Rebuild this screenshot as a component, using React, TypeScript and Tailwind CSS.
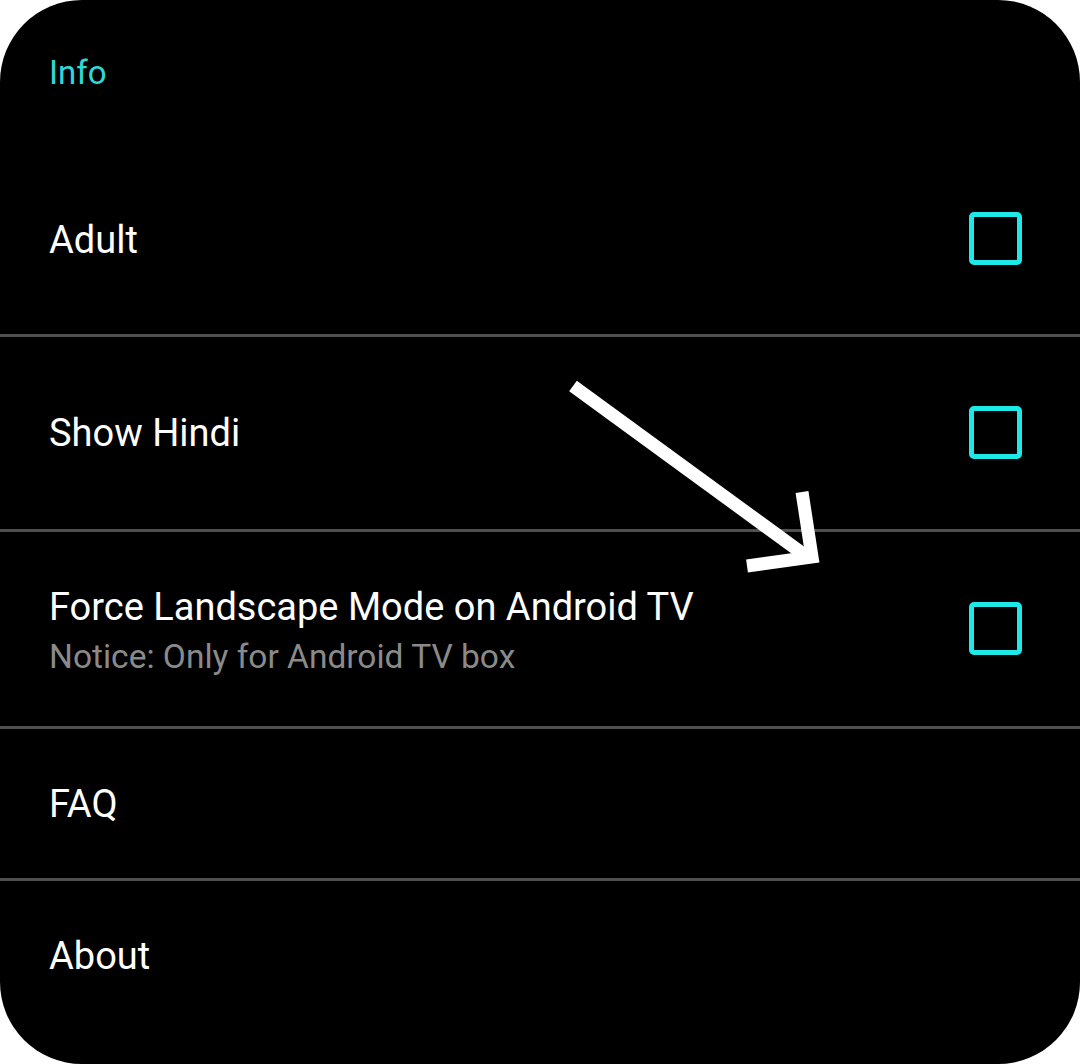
import React from "react";

function Box() {
  return <div className="w-[53px] h-[53px] rounded-[5px] border-[5px] border-[#1ee8e8] shrink-0 -mt-[2px]" />;
}

function Divider() {
  return <div className="h-[3px] bg-[#4f4f4f]" />;
}

export default function App() {
  return (
    <div className="w-[1080px] h-[1064px] bg-white" style={{ fontFamily: "Roboto, 'Noto Sans', sans-serif" }}>
      <div className="relative w-[1080px] h-[1064px] bg-black rounded-[82px] overflow-hidden flex flex-col">
        <div className="h-[145px] pl-[49px] flex items-center">
          <span className="text-[#2fd8d8] text-[33px] leading-none -mt-[1px]">Info</span>
        </div>
        <div className="h-[189px] pl-[49px] pr-[58px] flex items-center justify-between">
          <span className="text-white text-[38px] leading-none">Adult</span>
          <Box />
        </div>
        <Divider />
        <div className="h-[192px] pl-[49px] pr-[58px] flex items-center justify-between">
          <span className="text-white text-[38px] leading-none">Show Hindi</span>
          <Box />
        </div>
        <Divider />
        <div className="h-[194px] pl-[49px] pr-[58px] flex items-center justify-between">
          <div className="flex flex-col pt-[6px]">
            <span className="text-white text-[38px] leading-[49px]">Force Landscape Mode on Android TV</span>
            <span className="text-[#8a8a8a] text-[33.5px] leading-[49px]">Notice: Only for Android TV box</span>
          </div>
          <Box />
        </div>
        <Divider />
        <div className="h-[149px] pl-[49px] flex items-center">
          <span className="text-white text-[38px] leading-none">FAQ</span>
        </div>
        <Divider />
        <div className="h-[150px] pl-[49px] flex items-center">
          <span className="text-white text-[38px] leading-none">About</span>
        </div>
        <svg className="absolute left-0 top-0" width="1080" height="1064" viewBox="0 0 1080 1064">
          <line x1="573" y1="386" x2="806" y2="556" stroke="white" strokeWidth="13" />
          <polyline points="802,492 812,557 747,566" fill="none" stroke="white" strokeWidth="13" />
        </svg>
      </div>
    </div>
  );
}
